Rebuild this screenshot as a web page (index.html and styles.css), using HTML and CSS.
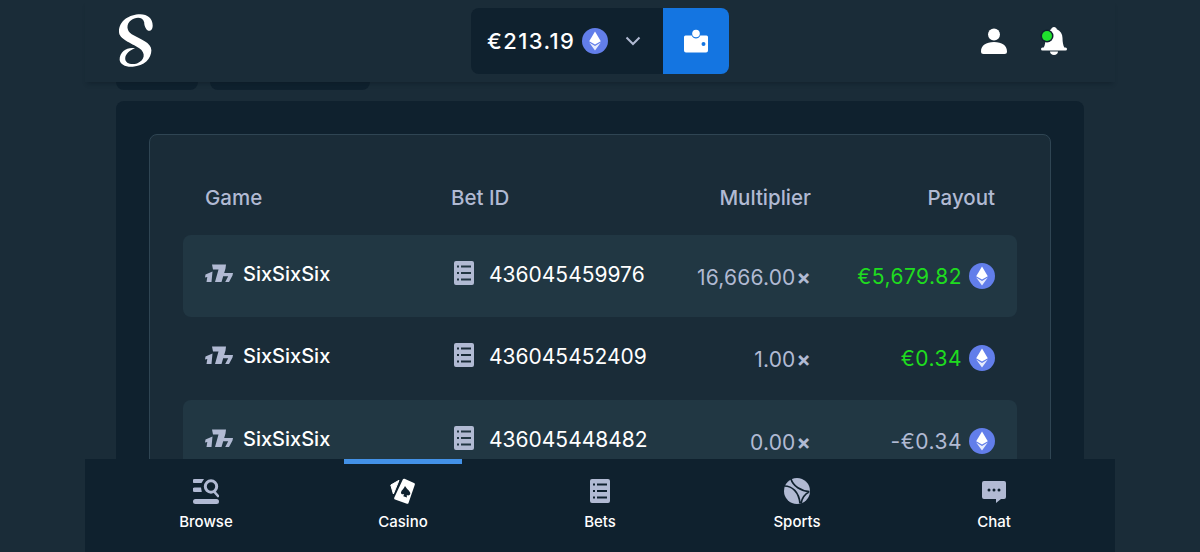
FILE: index.html
```html
<!DOCTYPE html>
<html lang="en">
<head>
<meta charset="utf-8">
<title>Bets</title>
<link rel="stylesheet" href="styles.css">
</head>
<body>
<svg class="defs" width="0" height="0" aria-hidden="true">
  <defs>
    <symbol id="eth" viewBox="0 0 26 26">
      <circle cx="13" cy="13" r="13" fill="#627eea"/>
      <path d="M13 3.500 7.200 13.200 13 16.600l5.800-3.400z" fill="#fff"/>
      <path d="M7.200 14.600 13 22.600l5.800-8L13 18z" fill="#fff" opacity=".85"/>
    </symbol>
    <symbol id="sevens" viewBox="0 0 28 18">
      <path d="M.5 10.500 7.500 7.500 6.500 18H1.500l.8-5-2.300.5zM7 .5h14l-.5 4L16.500 18H10l3.500-12.500H8zM18.800 9H28l-.5 2.500-3.500 6.500h-3.800l3-5.700h-4.900z" fill="currentColor"/>
    </symbol>
    <symbol id="list" viewBox="0 0 20 24">
      <path fill-rule="evenodd" d="M2 0h16a2 2 0 0 1 2 2v20a2 2 0 0 1-2 2H2a2 2 0 0 1-2-2V2a2 2 0 0 1 2-2zM3 4.600v2h2v-2zM7 4.600v2h10v-2zM3 11v2h2v-2zM7 11v2h10v-2zM3 17.400v2h2v-2zM7 17.400v2h10v-2z" fill="currentColor"/>
    </symbol>
  </defs>
</svg>
<div class="page">
  <header class="topbar">
    <svg class="logo" viewBox="110 38 110 168" aria-label="Logo">
      <path d="M216 76C216 55 200 42 178 42 145 42 113 62 113 95 113 118 150 128 175 146 196 160 192 184 168 192 150 197 132 192 132 177 132 163 147 152 162 146 140 141 115 155 115 180 115 195 135 204 155 202 190 200 212 178 212 152 212 128 178 118 152 103 136 92 134 72 150 60 162 50 186 48 190 66 190 82 200 95 208 92 214 90 216 84 216 76Z" fill="#fff"/>
    </svg>
    <div class="wallet">
      <div class="balance">
        <span class="amount">€213.19</span>
        <svg class="eth-icon"><use href="#eth"/></svg>
        <svg class="chevron" viewBox="0 0 16 10"><path d="M1.500 1.500 8 8l6.500-6.500" fill="none" stroke="#b1bad3" stroke-width="2"/></svg>
      </div>
      <button class="wallet-btn" aria-label="Wallet">
        <svg viewBox="0 0 26 24" width="26" height="24">
          <circle cx="13" cy="4.500" r="3.800" fill="#fff"/>
          <path fill-rule="evenodd" d="M2.500 6.500h6.200c.8 2 2.400 3 4.300 3s3.500-1 4.300-3h6.200A1.500 1.500 0 0 1 25 8v13.500a2 2 0 0 1-2 2H3a2 2 0 0 1-2-2V8a1.500 1.500 0 0 1 1.500-1.500zM20.500 13a2 2 0 1 0 0 4 2 2 0 0 0 0-4z" fill="#fff"/>
        </svg>
      </button>
    </div>
    <div class="top-icons">
      <svg class="user" viewBox="0 0 26 26" width="26" height="26" aria-label="Profile">
        <circle cx="13" cy="6.500" r="6" fill="#fff"/>
        <path d="M0 23.500C0 17.500 5 14 13 14s13 3.500 13 9.500A2.500 2.500 0 0 1 23.500 26h-21A2.500 2.500 0 0 1 0 23.500z" fill="#fff"/>
      </svg>
      <span class="bell">
        <svg viewBox="0 0 26 28" width="26" height="28" aria-label="Notifications">
          <path d="M13 0c1.500 0 2.500 1 2.800 2.200C19.500 3.800 21.500 7 21.500 11c0 4 .7 7.500 1.800 9.500h1.200a1.500 1.500 0 0 1 0 3h-23a1.500 1.500 0 0 1 0-3h1.200C4 18.500 4.500 15 4.500 11c0-4 2-7.200 5.700-8.800C10.500 1 11.500 0 13 0z" fill="#fff"/>
          <path d="M9 24.500h8c0 2-1.800 3.500-4 3.500s-4-1.500-4-3.500z" fill="#fff"/>
        </svg>
        <i class="dot"></i>
      </span>
    </div>
  </header>

  <main class="content">
    <div class="tabs"><span class="tab tab-a"></span><span class="tab tab-b"></span></div>
    <section class="panel">
      <div class="table">
        <div class="row head">
          <span>Game</span><span>Bet ID</span><span class="right">Multiplier</span><span class="right">Payout</span>
        </div>
        <div class="row alt">
          <span class="game"><svg class="sevens"><use href="#sevens"/></svg>SixSixSix</span>
          <span class="bet"><svg class="list"><use href="#list"/></svg>436045459976</span>
          <span class="right mult">16,666.00<b>×</b></span>
          <span class="right pay win">€5,679.82<svg class="eth-icon"><use href="#eth"/></svg></span>
        </div>
        <div class="row">
          <span class="game"><svg class="sevens"><use href="#sevens"/></svg>SixSixSix</span>
          <span class="bet"><svg class="list"><use href="#list"/></svg>436045452409</span>
          <span class="right mult">1.00<b>×</b></span>
          <span class="right pay win">€0.34<svg class="eth-icon"><use href="#eth"/></svg></span>
        </div>
        <div class="row alt">
          <span class="game"><svg class="sevens"><use href="#sevens"/></svg>SixSixSix</span>
          <span class="bet"><svg class="list"><use href="#list"/></svg>436045448482</span>
          <span class="right mult">0.00<b>×</b></span>
          <span class="right pay">-€0.34<svg class="eth-icon"><use href="#eth"/></svg></span>
        </div>
      </div>
    </section>
  </main>

  <nav class="bottom">
    <a class="nav-item">
      <svg viewBox="0 0 26 26" width="26" height="26">
        <path d="M1.500 1h9.500L8.500 5H1.500a2 2 0 0 1 0-4zM1.500 9.500h6.500l.8 4.500H1.500a2.200 2.200 0 0 1 0-4.500zM2.500 21h21a2.500 2.500 0 0 1 0 5h-21a2.500 2.500 0 0 1 0-5z" fill="#b1bad3"/>
        <circle cx="18" cy="8.500" r="5.700" fill="none" stroke="#b1bad3" stroke-width="3"/>
        <path d="m21.500 14 3.500 4" stroke="#b1bad3" stroke-width="2.600" stroke-linecap="round"/>
      </svg>
      <span>Browse</span>
    </a>
    <a class="nav-item active">
      <svg viewBox="0 0 26 26" width="26" height="26">
        <path d="M.8 7 9 2.300 3.400 16z" fill="#fff" stroke="#fff" stroke-linejoin="round"/>
        <path fill-rule="evenodd" d="M14.500 .8 24 5c.8.400 1 1 .8 1.700L18.500 25c-.2.800-.9 1-1.600.8L5 21.500c-.8-.3-1-1-.8-1.700L12.800 1.500c.3-.7 1-1 1.700-.7zM15 8c-.8 2.700-3.800 4.200-4 6.400-.1 1.700 1.600 2.500 3.200 1.600l-.9 2.300 3.600 1.200-.1-2.400c1.500 1 3.300.2 3.500-1.500.2-2.200-3-4-5.300-7.600z" fill="#fff"/>
      </svg>
      <span>Casino</span>
    </a>
    <a class="nav-item">
      <svg class="list nav-list"><use href="#list"/></svg>
      <span>Bets</span>
    </a>
    <a class="nav-item">
      <svg viewBox="0 0 26 26" width="26" height="26">
        <circle cx="13" cy="13" r="13" fill="#b1bad3"/>
        <path d="M7 1C9 8 17 13 25.500 13.500M.5 8C8 8 15 14 16 25.500M25 14C21 16 18 20 17 25.500" fill="none" stroke="#0f212e" stroke-width="1.700"/>
      </svg>
      <span>Sports</span>
    </a>
    <a class="nav-item">
      <svg viewBox="0 0 24 24" width="24" height="24">
        <path d="M2 2h20a2 2 0 0 1 2 2v14a2 2 0 0 1-2 2h-3l-5 4v-4H2a2 2 0 0 1-2-2V4a2 2 0 0 1 2-2z" fill="#b1bad3"/>
        <circle cx="7" cy="11" r="1.500" fill="#0f212e"/><circle cx="12" cy="11" r="1.500" fill="#0f212e"/><circle cx="17" cy="11" r="1.500" fill="#0f212e"/>
      </svg>
      <span>Chat</span>
    </a>
  </nav>
</div>
</body>
</html>
```
FILE: styles.css
```css
* { box-sizing: border-box; }
html, body { margin: 0; height: 100%; }
body {
  background: #1a2c38;
  color: #fff;
  font-family: Inter, Lato, "Liberation Sans", sans-serif;
  overflow: hidden;
}
.defs { position: absolute; }
.page {
  height: 552px;
  display: flex;
  flex-direction: column;
  align-items: center;
  overflow: hidden;
}
.topbar {
  position: relative;
  z-index: 2;
  flex: none;
  width: 1030px;
  height: 82px;
  background: #1a2c38;
  box-shadow: 0 4px 4px -2px rgba(10, 24, 34, .4);
  display: grid;
  grid-template-columns: 1fr auto 1fr;
  align-items: center;
  padding: 0 33px;
}
.logo { width: 36px; height: 55px; margin-top: -1px; }
.wallet { display: flex; height: 66px; }
.balance {
  width: 192px;
  background: #0f212e;
  border-radius: 8px 0 0 8px;
  display: flex;
  align-items: center;
  padding-left: 16px;
}
.amount { font-size: 22px; font-weight: 500; letter-spacing: 1.400px; width: 95px; white-space: nowrap; }
.eth-icon { width: 26px; height: 26px; flex: none; }
.chevron { width: 16px; height: 10px; margin-left: 17px; }
.wallet-btn {
  width: 66px;
  border: 0;
  padding: 0;
  background: #1475e1;
  border-radius: 0 8px 8px 0;
  display: flex;
  align-items: center;
  justify-content: center;
}
.top-icons { display: flex; justify-content: flex-end; align-items: center; gap: 34px; margin-right: 15px; }
.bell { position: relative; display: flex; }
.dot {
  position: absolute;
  left: 1px;
  top: 4px;
  width: 10px;
  height: 10px;
  border-radius: 50%;
  background: #1fe02d;
  box-shadow: 0 0 0 1.500px #0f212e;
}
.content {
  flex: 1;
  min-height: 0;
  width: 968px;
  overflow: hidden;
}
.tabs { display: flex; gap: 12px; height: 19px; align-items: flex-start; }
.tab { height: 8px; background: #0f212e; border-radius: 0 0 8px 8px; }
.tab-a { width: 82px; }
.tab-b { width: 160px; }
.panel {
  background: #0f212e;
  border-radius: 8px 8px 0 0;
  padding: 33px 33px 0;
  min-height: 400px;
}
.table {
  border: 1px solid #2f4553;
  border-radius: 8px;
  background: #1a2c38;
  padding: 0 33px 40px;
  min-height: 360px;
}
.row {
  display: grid;
  grid-template-columns: 246px 210px 150px 184px;
  align-items: center;
  height: 82px;
  padding: 0 22px;
  border-radius: 8px;
  font-size: 20px;
}
.row.alt { background: #213743; }
.row.alt:last-child { margin-top: 1px; }
.head {
  height: 100px;
  padding-top: 24px;
  color: #b1bad3;
  font-size: 20.500px;
  font-weight: 500;
}
.right { text-align: right; display: flex; justify-content: flex-end; align-items: center; }
.game, .bet { display: flex; align-items: center; padding-bottom: 4px; }
.game { font-weight: 500; }
.sevens { width: 28px; height: 18px; color: #b1bad3; margin-right: 10px; margin-top: -3px; }
.bet { font-size: 21px; font-weight: 400; }
.list { width: 20px; height: 24px; color: #b1bad3; margin: -2px 15px 0 3px; flex: none; }
.mult { color: #b1bad3; padding-top: 2px; font-size: 21px; letter-spacing: .2px; }
.mult b { font-weight: 700; margin-left: 1px; }
.pay { color: #b1bad3; gap: 7px; font-size: 21px; letter-spacing: .5px; }
.pay.win { color: #1fdc1f; }
.bottom {
  position: relative;
  z-index: 2;
  flex: none;
  width: 1030px;
  height: 93px;
  background: #0f212e;
  display: flex;
  justify-content: space-between;
  padding: 0 62px;
}
.nav-item {
  width: 118px;
  padding-top: 19px;
  display: flex;
  flex-direction: column;
  align-items: center;
  font-size: 15px;
  font-weight: 500;
  gap: 8px;
}
.nav-item svg { height: 26px; }
.nav-item.active { border-top: 5px solid #4391e7; padding-top: 14px; }
.nav-list { margin: 0; width: 20px; }
```
